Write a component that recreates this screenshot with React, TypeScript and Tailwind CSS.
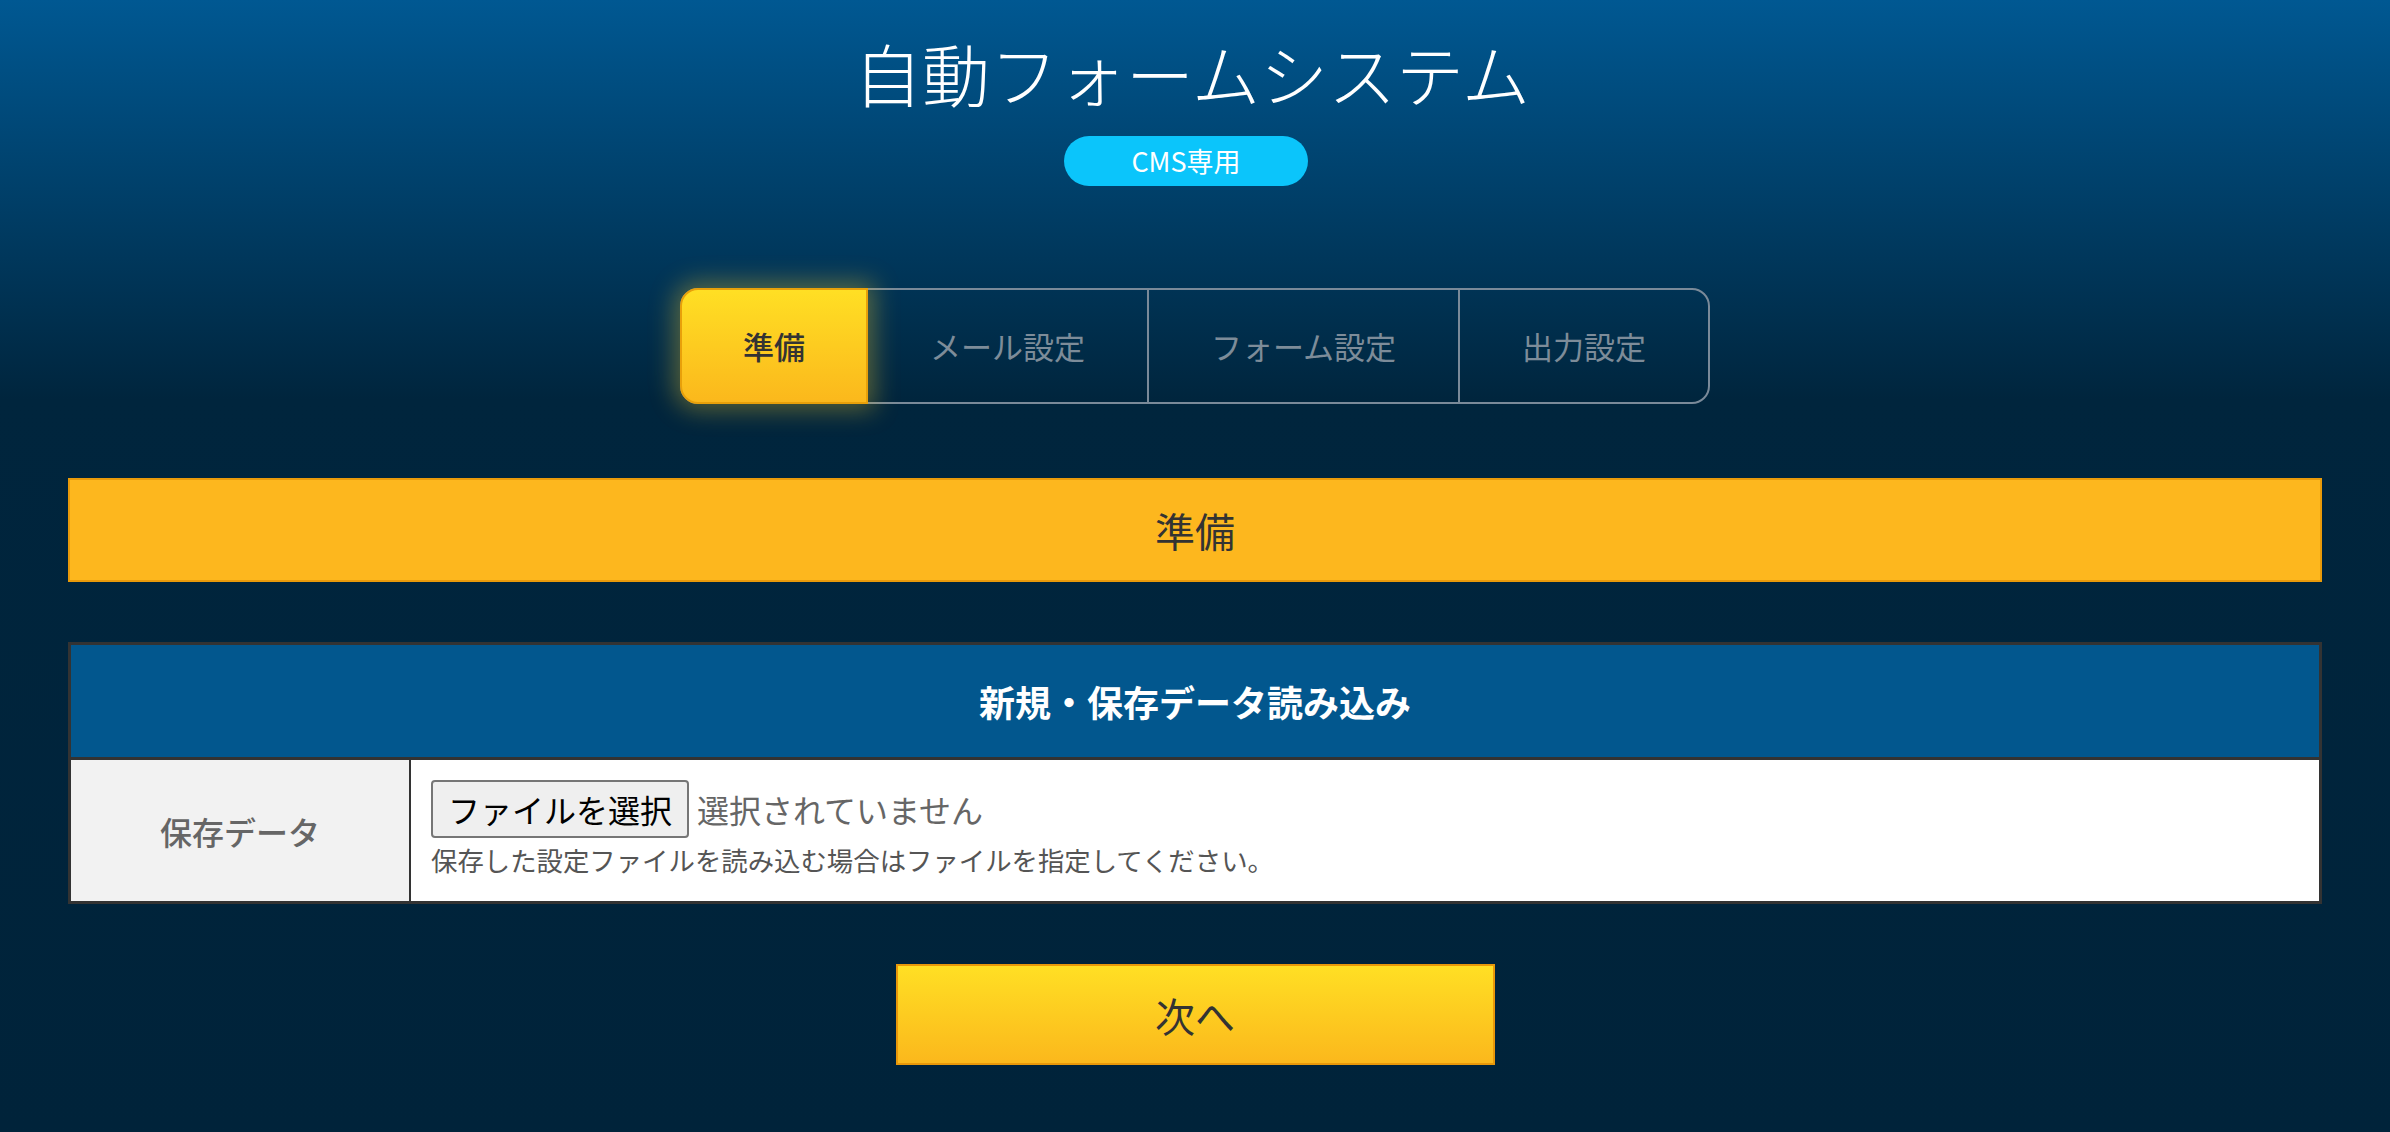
import React from "react";

const jp = { fontFamily: '"Noto Sans CJK JP", "Noto Sans", sans-serif' };

export default function App() {
  const tabs = ["準備", "メール設定", "フォーム設定", "出力設定"];
  return (
    <div
      className="min-h-screen w-full bg-[linear-gradient(to_bottom,#005892_0px,#00253d_400px,#00233a_100%)] pb-[68px]"
      style={jp}
    >
      <div className="flex flex-col items-center pt-[30px]">
        <h1 className="mr-[6px] text-[68px] leading-[86px] font-light text-white">自動フォームシステム</h1>
        <div className="mr-[18px] mt-[20px] flex h-[50px] w-[244px] items-center justify-center rounded-full bg-[#0bc5fb] text-[27px] text-white">
          CMS専用
        </div>
      </div>

      <div className="mt-[102px] flex justify-center">
        <div className="flex h-[116px] rounded-[18px] border-2 border-[#7a8a99]">
          {tabs.map((t, i) =>
            i === 0 ? (
              <div
                key={t}
                className="-my-[2px] -ml-[2px] flex items-center rounded-l-[18px] border-2 border-[#e8a00a] bg-[linear-gradient(to_bottom,#ffdf24,#fbb81c)] px-[61px] text-[31px] font-medium text-[#333] shadow-[0_0_24px_6px_rgba(255,210,40,0.35)]"
              >
                {t}
              </div>
            ) : (
              <div
                key={t}
                className={`flex items-center px-[62px] text-[31px] text-[#7d8c99] ${i > 1 ? "border-l-2 border-[#7a8a99]" : ""}`}
              >
                {t}
              </div>
            )
          )}
        </div>
      </div>

      <div className="mx-[68px] mt-[74px] flex h-[104px] items-center justify-center border-2 border-[#e89a0a] bg-[#fdb71e] text-[40px] text-[#333]">
        準備
      </div>

      <div className="mx-[68px] mt-[60px] border-[3px] border-[#333]">
        <div className="flex h-[112px] items-center justify-center bg-[#02578e] text-[36px] font-bold text-white">
          新規・保存データ読み込み
        </div>
        <div className="flex h-[144px] border-t-[3px] border-[#333] bg-white">
          <div className="flex w-[340px] items-center justify-center border-r-2 border-[#333] bg-[#f2f2f2] text-[32px] font-medium text-[#666]">
            保存データ
          </div>
          <div className="flex flex-1 flex-col justify-center px-[20px] pb-[4px]">
            <div className="flex items-center">
              <div className="flex h-[58px] items-center rounded-[4px] border-2 border-[#767676] bg-[#efefef] px-[15px] text-[32px] text-black">
                ファイルを選択
              </div>
              <span className="ml-[8px] text-[32px] text-[#666]">選択されていません</span>
            </div>
            <div className="mt-[4px] text-[26.4px] leading-[36px] text-[#555]">
              保存した設定ファイルを読み込む場合はファイルを指定してください。
            </div>
          </div>
        </div>
      </div>

      <div className="mt-[60px] flex justify-center">
        <button className="flex h-[101px] w-[599px] items-center justify-center border-2 border-[#e8980a] bg-[linear-gradient(to_bottom,#ffdf24,#fbb81c)] text-[40px] text-[#333]" style={jp}>
          次へ
        </button>
      </div>
    </div>
  );
}
